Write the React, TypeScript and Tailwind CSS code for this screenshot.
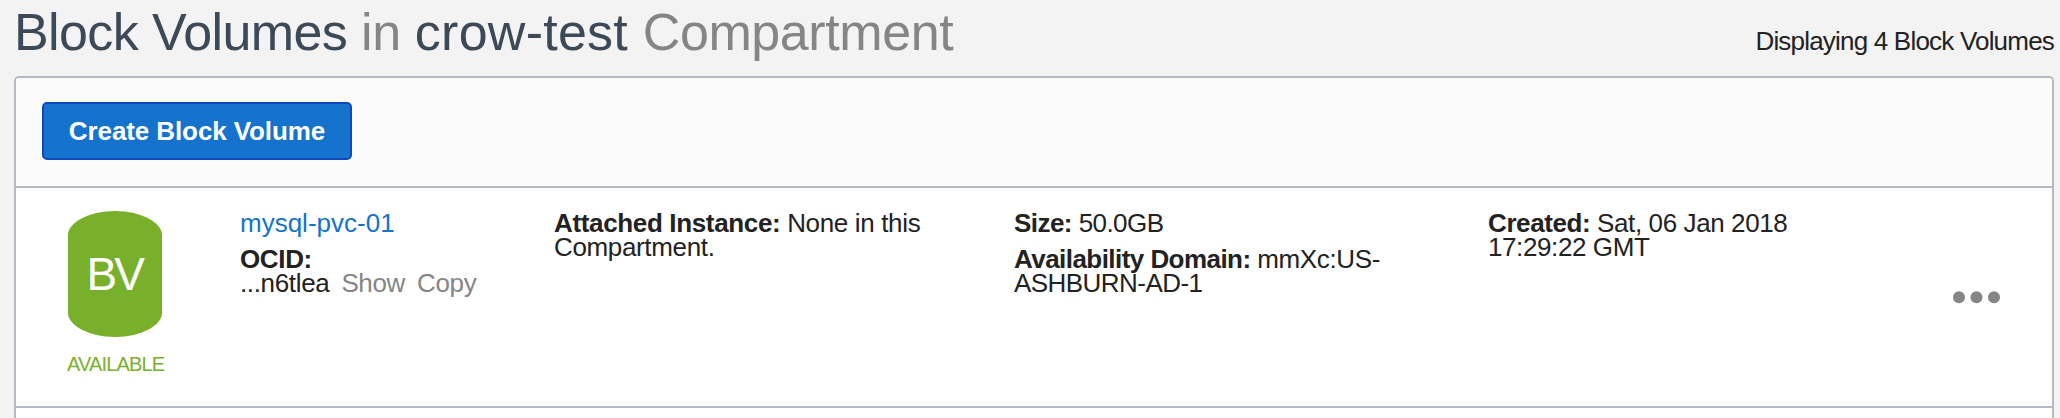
import type { ReactNode } from "react";

function Field({ label, children }: { label: string; children: ReactNode }) {
  return (
    <p>
      <span className="font-bold">{label}</span> {children}
    </p>
  );
}

function VolumeStatus() {
  return (
    <div className="w-[172px] shrink-0">
      <svg className="block" width="94" height="126" viewBox="0 0 94 126">
        <path d="M0 24C0 12 20 0 47 0S94 12 94 24V102C94 114 74 126 47 126S0 114 0 102Z" fill="#79b02b" />
        <text x="18.5" y="79" fontSize="46" letterSpacing="-3" fill="#fff" fontFamily="Liberation Sans, Arial, sans-serif">
          BV
        </text>
      </svg>
      <div className="mt-[15px] -ml-px text-[20px] leading-[24px] tracking-[-0.85px] text-[#79b02b]">AVAILABLE</div>
    </div>
  );
}

export default function App() {
  return (
    <div className="flex h-[418px] flex-col overflow-hidden bg-[#f3f3f3] pr-[6px] pl-[14px] font-['Liberation_Sans',Arial,sans-serif] text-[26px] leading-[24px] tracking-[-0.35px] text-[#222]">
      <header className="flex h-[76px] shrink-0 justify-between whitespace-nowrap">
        <h1 className="pt-[2px] text-[52px] leading-[60px] tracking-[-0.4px] text-[#3c4a57]">
          <span className="tracking-[-0.6px]">Block Volumes </span>
          <span className="text-[#858585]">in</span> <span className="tracking-[0.25px]">crow-test </span>
          <span className="text-[#858585]">Compartment</span>
        </h1>
        <div className="pt-[29px] tracking-[-0.8px]">Displaying 4 Block Volumes</div>
      </header>
      <main className="flex flex-1 flex-col rounded-t-[5px] border-2 border-b-0 border-[#b4bac4] bg-white">
        <div className="h-[110px] shrink-0 rounded-t-[3px] border-b-2 border-[#b4bac4] bg-[#fbfbfb] pt-[24px] pl-[26px]">
          <button className="flex h-[58px] w-[310px] items-center justify-center rounded-[5px] border-2 border-[#0f48bd] bg-[#1573cd] font-bold tracking-[-0.1px] text-white">
            Create Block Volume
          </button>
        </div>
        <article className="flex h-[220px] shrink-0 border-b-2 border-[#b4bac4] pt-[23px] pl-[52px]">
          <VolumeStatus />
          <div className="flex w-[314px] shrink-0 flex-col gap-[12px]">
            <a className="tracking-normal text-[#1573cd]">mysql-pvc-01</a>
            <div>
              <div className="font-bold">OCID:</div>
              <div className="flex gap-[12px]">
                <span>...n6tlea</span>
                <a className="text-[#858585]">Show</a>
                <a className="text-[#858585]">Copy</a>
              </div>
            </div>
          </div>
          <div className="w-[460px] shrink-0 pr-[80px]">
            <Field label="Attached Instance:">None in this Compartment.</Field>
          </div>
          <div className="flex w-[474px] shrink-0 flex-col gap-[12px] pr-[100px] tracking-[-0.55px]">
            <Field label="Size:">50.0GB</Field>
            <Field label="Availability Domain:">
              <span className="tracking-[-0.35px]">mmXc:US-</span>
              <br />
              ASHBURN-AD-1
            </Field>
          </div>
          <div className="w-[320px] shrink-0 tracking-[-0.4px]">
            <Field label="Created:">Sat, 06 Jan 2018 17:29:22 GMT</Field>
          </div>
          <svg className="mt-[80px] ml-[144px] block" width="50" height="14" viewBox="0 0 50 14" fill="#858585">
            <circle cx="7" cy="6.2" r="6" />
            <circle cx="24.5" cy="6.2" r="6" />
            <circle cx="42" cy="6.2" r="6" />
          </svg>
        </article>
      </main>
    </div>
  );
}
